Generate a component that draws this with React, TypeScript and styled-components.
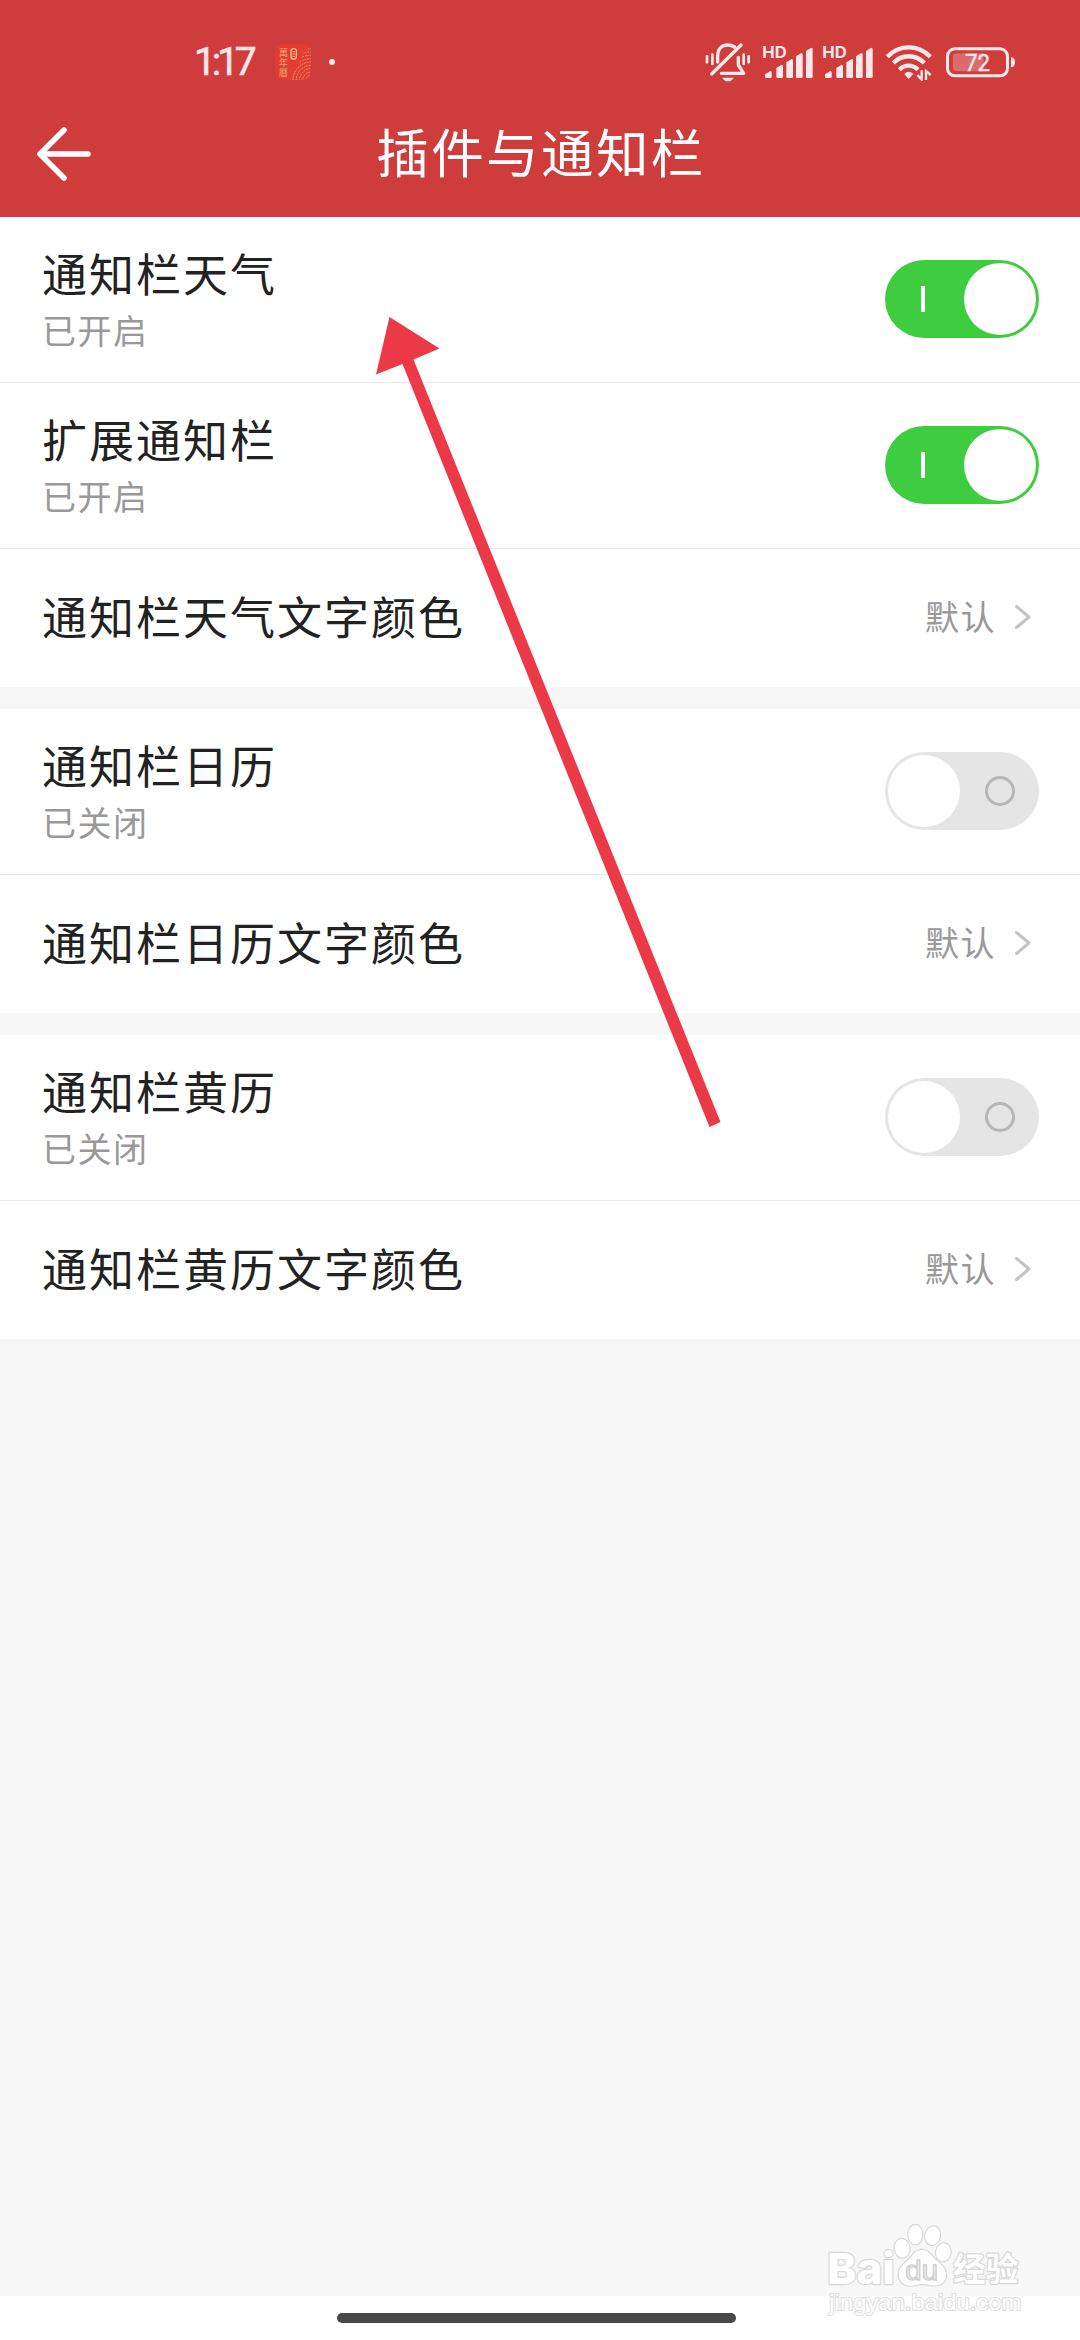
import React from 'react';
import styled, { createGlobalStyle } from 'styled-components';

const PALE = '#fde7e8';

const GlobalStyle = createGlobalStyle`
  * { box-sizing: border-box; }
  body {
    margin: 0;
    background: #f7f7f7;
    font-family: "Noto Sans CJK SC", sans-serif;
  }
`;

const Screen = styled.div`
  position: relative;
  display: flex;
  flex-direction: column;
  width: 1080px;
  height: 2340px;
  overflow: hidden;
  background: #f7f7f7;
`;

const Header = styled.header`
  flex: none;
  height: 217px;
  background: #cf3c3c;
`;

const StatusBar = styled.div`
  display: flex;
  align-items: center;
  justify-content: space-between;
  height: 90px;
  padding: 34px 64px 0 194px;
`;

const StatusGroup = styled.div`
  display: flex;
  align-items: center;
`;

const Clock = styled.span`
  width: 81px;
  font: 400 39px/56px Roboto, sans-serif;
  letter-spacing: -4.2px;
  -webkit-text-stroke: 0.6px ${PALE};
  white-space: nowrap;
  color: ${PALE};
`;

const Dot = styled.span`
  width: 6px;
  height: 6px;
  margin-left: 18px;
  border-radius: 50%;
  background: ${PALE};
`;

const StatusIcon = styled.svg<{ $w: number; $h: number; $ml?: number }>`
  display: block;
  flex: none;
  width: ${(p) => p.$w}px;
  height: ${(p) => p.$h}px;
  margin-left: ${(p) => p.$ml ?? 0}px;
`;

const NavBar = styled.div`
  display: grid;
  grid-template-columns: 120px 1fr 120px;
  align-items: center;
  height: 127px;
`;

const BackButton = styled.button`
  display: flex;
  padding: 0 0 0 36px;
  border: 0;
  background: none;
`;

const PageTitle = styled.h1`
  margin: 0 0 7px;
  padding-left: 2px;
  font-size: 52.5px;
  font-weight: 400;
  line-height: 76px;
  letter-spacing: 2.4px;
  text-align: center;
  color: #fff;
`;

const Main = styled.main`
  display: flex;
  flex: 1;
  flex-direction: column;
  gap: 22px;
`;

const Group = styled.section`
  background: #fff;
`;

const Row = styled.div<{ $tall?: boolean }>`
  display: flex;
  align-items: center;
  justify-content: space-between;
  height: ${(p) => (p.$tall ? 166 : 138)}px;
  padding: 0 41px ${(p) => (p.$tall ? 1 : 2)}px 42px;
  border-bottom: ${(p) => (p.$tall ? '1px solid #ebebeb' : '0')};
`;

const Labels = styled.div`
  display: flex;
  flex-direction: column;
  gap: 1px;
  margin-bottom: 1px;
`;

const Label = styled.span`
  font-size: 45px;
  line-height: 62px;
  letter-spacing: 2px;
  color: #222;
`;

const SoloLabel = styled(Label)`
  margin-bottom: 2px;
`;

const Hint = styled.span`
  font-size: 34px;
  line-height: 50px;
  letter-spacing: 1.5px;
  color: #999;
`;

const Value = styled.span`
  display: flex;
  align-items: center;
  gap: 17px;
  padding-right: 8px;
`;

const ValueText = styled(Hint)`
  margin-bottom: 2px;
`;

const Track = styled.button<{ $on: boolean }>`
  display: flex;
  flex-direction: ${(p) => (p.$on ? 'row' : 'row-reverse')};
  align-items: center;
  justify-content: space-between;
  width: 154px;
  height: 78px;
  padding: ${(p) => (p.$on ? '0 3px 0 36px' : '0 24px 0 3px')};
  border: 0;
  border-radius: 39px;
  background: ${(p) => (p.$on ? '#3fcd40' : '#e5e5e5')};
`;

const Knob = styled.span`
  width: 72px;
  height: 72px;
  border-radius: 50%;
  background: #fff;
`;

const OnMark = styled.span`
  width: 4px;
  height: 26px;
  background: #fff;
`;

const OffMark = styled.span`
  width: 30px;
  height: 30px;
  border: 3px solid #b6b6b6;
  border-radius: 50%;
`;

const GestureBar = styled.footer`
  display: flex;
  flex: none;
  align-items: center;
  justify-content: center;
  height: 44px;
  padding-right: 7px;
  background: #fff;
`;

const Handle = styled.div`
  width: 399px;
  height: 10px;
  border-radius: 5px;
  background: #484848;
`;

const PointerArrow = styled.svg`
  position: absolute;
  left: 370px;
  top: 310px;
  width: 360px;
  height: 825px;
  pointer-events: none;
`;

const Watermark = styled.svg`
  position: absolute;
  left: 820px;
  top: 2216px;
  width: 210px;
  height: 110px;
  pointer-events: none;
`;

function Toggle({ on }: { on: boolean }) {
  return (
    <Track $on={on} role="switch" aria-checked={on}>
      {on ? <OnMark /> : <OffMark />}
      <Knob />
    </Track>
  );
}

function SwitchRow({ label, on }: { label: string; on: boolean }) {
  return (
    <Row $tall>
      <Labels>
        <Label>{label}</Label>
        <Hint>{on ? '已开启' : '已关闭'}</Hint>
      </Labels>
      <Toggle on={on} />
    </Row>
  );
}

function LinkRow({ label, value }: { label: string; value: string }) {
  return (
    <Row>
      <SoloLabel>{label}</SoloLabel>
      <Value>
        <ValueText>{value}</ValueText>
        <svg width="18" height="26" viewBox="0 0 18 26" fill="none" stroke="#c4c4c4" strokeWidth="3" strokeLinecap="round" strokeLinejoin="round">
          <path d="M3.5 2.5 L16 13 L3.5 23.5" />
        </svg>
      </Value>
    </Row>
  );
}

function CalendarAppIcon() {
  return (
    <StatusIcon $w={36} $h={36} viewBox="0 0 108 108">
      <defs>
        <clipPath id="ridge">
          <path d="M46 108 C54 78 74 58 82 34 C90 14 98 12 108 12 V82 C106 98 98 108 82 108 Z" />
        </clipPath>
      </defs>
      <rect width="108" height="108" rx="26" fill="#e33c33" />
      <g clipPath="url(#ridge)" fill="none" stroke="#e6a06a" strokeWidth="3" strokeDasharray="5 3">
        {[14, 24, 34, 44, 54, 64, 74, 84, 94, 104].map((r) => (
          <circle key={r} cx="108" cy="108" r={r} />
        ))}
      </g>
      <g fill="#eaa873" fontFamily="Noto Sans CJK TC, sans-serif" fontSize="27">
        <text x="12" y="36">萬</text>
        <text x="12" y="66">年</text>
        <text x="12" y="95">曆</text>
      </g>
      <rect x="48" y="14" width="16" height="31" rx="7" fill="none" stroke="#eebb80" strokeWidth="4" />
      <path d="M52 23 H60 M52 30 H60 M52 37 H60" stroke="#eebb80" strokeWidth="3" />
    </StatusIcon>
  );
}

function MutedBellIcon() {
  return (
    <StatusIcon $w={46} $h={40} viewBox="45 38 138 120" fill="none" stroke={PALE} strokeWidth="10" strokeLinecap="round" strokeLinejoin="round">
      <path d="M83 98 V80 C83 59 95 47 113 47 C121 47 128 49 134 53" />
      <path d="M65 134 L153 47" />
      <path d="M145 84 V107 L161 132 H94" />
      <path d="M97 145 H131 C128 152 121 156 114 156 C107 156 100 152 97 145 Z" fill={PALE} stroke="none" />
      <path d="M51 81 V99 M67 76 V104 M161 76 V104 M176 81 V99" strokeWidth="8" />
    </StatusIcon>
  );
}

function SignalIcon({ ml }: { ml: number }) {
  const bars = [
    [222, 122],
    [256, 103],
    [286, 86],
    [315, 68],
    [345, 52],
  ];
  return (
    <StatusIcon $w={52} $h={44} $ml={ml} viewBox="213 29 156 132">
      <text x="214" y="84" fontFamily="Inter, sans-serif" fontWeight="700" fontSize="48" textLength="73" lengthAdjust="spacingAndGlyphs" fill={PALE}>
        HD
      </text>
      {bars.map(([x, y]) => (
        <path key={x} fill={PALE} d={`M${x} ${y + 10} L${x + 16} ${y} Q${x + 20} ${y} ${x + 20} ${y + 5} V139 Q${x + 20} 143 ${x + 16} 143 H${x + 4} Q${x} 143 ${x} 139 Z`} />
      ))}
    </StatusIcon>
  );
}

function WifiIcon() {
  return (
    <StatusIcon $w={48} $h={38} $ml={11} viewBox="72 40 144 114" fill="none" stroke={PALE} strokeWidth="13">
      <path d="M79 81 C115 44 171 44 208 81" />
      <path d="M97 100 C123 73 163 73 190 100" />
      <path d="M115 120 C131 104 155 104 171 120" />
      <path d="M143 148 L130 133 Q143 119 157 133 Z" fill={PALE} stroke="none" />
      <path d="M182 122 V150 L169 136 M195 151 V124 L209 136" strokeWidth="7" />
    </StatusIcon>
  );
}

function BatteryIcon() {
  return (
    <StatusIcon $w={70} $h={32} $ml={13} viewBox="258 47 210 96">
      <rect x="262.5" y="55.5" width="180" height="81" rx="22" fill="none" stroke={PALE} strokeWidth="9" />
      <path d="M290 69 H371 V123 H290 Q279 123 279 112 V80 Q279 69 290 69 Z" fill={PALE} opacity="0.28" />
      <path d="M453 81 Q465 81 465 96 Q465 111 453 111 Z" fill={PALE} />
      <text x="315" y="121" fontFamily="Roboto, sans-serif" fontSize="70" textLength="75" lengthAdjust="spacingAndGlyphs" fill={PALE} stroke={PALE} strokeWidth="1.5">
        72
      </text>
    </StatusIcon>
  );
}

function BaiduWatermark() {
  return (
    <Watermark viewBox="60 48 630 330">
      <g fill="#fff" stroke="#d8d8d8" strokeWidth="7" paintOrder="stroke" strokeLinejoin="round">
        <text x="82" y="252" fontFamily="Inter, sans-serif" fontWeight="800" fontSize="129" textLength="202" lengthAdjust="spacingAndGlyphs">
          Bai
        </text>
        <ellipse cx="306" cy="145" rx="22" ry="28" transform="rotate(-8 306 145)" />
        <ellipse cx="346" cy="104" rx="21" ry="29" />
        <ellipse cx="398" cy="107" rx="22" ry="28" transform="rotate(12 398 107)" />
        <ellipse cx="430" cy="157" rx="22" ry="27" transform="rotate(10 430 157)" />
        <path d="M366 149 C387 149 395 168 407 179 C421 191 438 202 438 225 C438 248 420 258 398 256 C384 255 378 252 366 252 C354 252 347 256 334 257 C311 258 296 244 296 222 C296 201 313 192 326 179 C338 167 345 149 366 149 Z" />
        <text x="459" y="243" fontFamily="Noto Sans CJK SC, sans-serif" fontWeight="700" fontSize="100" textLength="196" lengthAdjust="spacingAndGlyphs">
          经验
        </text>
        <text x="88" y="330" fontFamily="Liberation Sans, sans-serif" fontSize="64" textLength="576" lengthAdjust="spacingAndGlyphs" stroke="#e0e0e0" strokeWidth="6">
          jingyan.baidu.com
        </text>
      </g>
      <text x="316" y="240" fontFamily="Liberation Sans, sans-serif" fontSize="82" textLength="98" lengthAdjust="spacingAndGlyphs" fill="#f2f2f2" stroke="#d0d0d0" strokeWidth="4">
        du
      </text>
    </Watermark>
  );
}

export default function App() {
  return (
    <>
      <GlobalStyle />
      <Screen>
        <Header>
          <StatusBar>
            <StatusGroup>
              <Clock>1:17</Clock>
              <CalendarAppIcon />
              <Dot />
            </StatusGroup>
            <StatusGroup>
              <MutedBellIcon />
              <SignalIcon ml={11} />
              <SignalIcon ml={8} />
              <WifiIcon />
              <BatteryIcon />
            </StatusGroup>
          </StatusBar>
          <NavBar>
            <BackButton aria-label="返回">
              <svg width="56" height="56" viewBox="0 0 56 56" fill="none" stroke="#fff" strokeWidth="5.5" strokeLinecap="round" strokeLinejoin="round">
                <path d="M28 4 L4 28 L28 52 M4 28 H52" />
              </svg>
            </BackButton>
            <PageTitle>插件与通知栏</PageTitle>
          </NavBar>
        </Header>
        <Main>
          <Group>
            <SwitchRow label="通知栏天气" on />
            <SwitchRow label="扩展通知栏" on />
            <LinkRow label="通知栏天气文字颜色" value="默认" />
          </Group>
          <Group>
            <SwitchRow label="通知栏日历" on={false} />
            <LinkRow label="通知栏日历文字颜色" value="默认" />
          </Group>
          <Group>
            <SwitchRow label="通知栏黄历" on={false} />
            <LinkRow label="通知栏黄历文字颜色" value="默认" />
          </Group>
        </Main>
        <GestureBar>
          <Handle />
        </GestureBar>
        <PointerArrow viewBox="370 310 360 825">
          <path d="M389.5 317 L439.5 348.5 L413.5 359.5 L720.5 1122 L709.5 1127 L402.5 364 L376 374.5 Z" fill="#ec3948" />
        </PointerArrow>
        <BaiduWatermark />
      </Screen>
    </>
  );
}
